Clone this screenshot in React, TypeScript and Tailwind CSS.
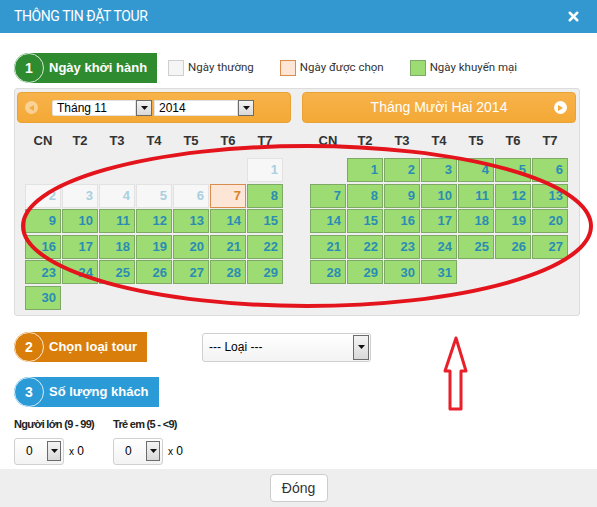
import React from "react";
import { X } from "lucide-react";

type Cell = { d: number | null; kind?: "off" | "sel" | "promo" };

const days = ["CN", "T2", "T3", "T4", "T5", "T6", "T7"];

function buildNov(): Cell[] {
  const cells: Cell[] = [];
  for (let i = 0; i < 6; i++) cells.push({ d: null });
  for (let d = 1; d <= 30; d++) {
    if (d <= 6) cells.push({ d, kind: "off" });
    else if (d === 7) cells.push({ d, kind: "sel" });
    else cells.push({ d, kind: "promo" });
  }
  return cells;
}

function buildDec(): Cell[] {
  const cells: Cell[] = [{ d: null }];
  for (let d = 1; d <= 31; d++) cells.push({ d, kind: "promo" });
  return cells;
}

function DayCell({ cell }: { cell: Cell }) {
  if (cell.d === null) return <div className="h-[24px]" />;
  const cls =
    cell.kind === "off"
      ? "bg-[#f7f7f7] border-[#e2e2e2] text-[#a9cfe0]"
      : cell.kind === "sel"
      ? "bg-[#fde6d6] border-[#d98c4e] text-[#d7822f]"
      : "bg-[#9ddc72] border-[#7ea866] text-[#2a8cb4]";
  return (
    <div className={`h-[24px] border flex items-center justify-end pr-[4px] text-[13px] font-bold ${cls}`}>
      {cell.d}
    </div>
  );
}

function DropBtn({ className }: { className: string }) {
  return (
    <span className={`flex items-center justify-center border border-[#6b6b6b] bg-gradient-to-b from-[#f4f4f4] to-[#d9d9d9] ${className}`}>
      <svg width="7" height="4" viewBox="0 0 7 4">
        <path d="M0 0 L7 0 L3.5 4 Z" fill="#111" />
      </svg>
    </span>
  );
}

function MonthPanel({ cells, left }: { cells: Cell[]; left: boolean }) {
  return (
    <div className="w-[274px]">
      <div className="h-[31px] rounded-[4px] border border-[#e9a236] bg-gradient-to-b from-[#f7b24a] to-[#f4a935] flex items-center relative">
        {left ? (
          <div className="flex items-center w-full">
            <span className="ml-[7px] w-[13px] h-[13px] rounded-full bg-white/45 flex items-center justify-center">
              <svg width="5" height="6" viewBox="0 0 5 6">
                <path d="M5 0 L0 3 L5 6 Z" fill="#f4ab3c" />
              </svg>
            </span>
            <div className="ml-[14px] flex items-center">
              <span className="w-[84px] h-[16px] bg-white rounded-l-[2px] border border-[#e2e2e2] text-[12px] text-black leading-[14px] pl-[4px]">
                Tháng 11
              </span>
              <DropBtn className="w-[16px] h-[16px]" />
              <span className="ml-[2px] w-[84px] h-[16px] bg-white border border-[#e2e2e2] text-[12px] text-black leading-[14px] pl-[4px]">
                2014
              </span>
              <DropBtn className="w-[16px] h-[16px]" />
            </div>
          </div>
        ) : (
          <>
            <span className="flex-1 text-center text-white text-[14px]">Tháng Mười Hai 2014</span>
            <span className="absolute right-[8px] top-[8px] w-[13px] h-[13px] rounded-full bg-white flex items-center justify-center">
              <svg width="5" height="6" viewBox="0 0 5 6">
                <path d="M0 0 L5 3 L0 6 Z" fill="#f4ab3c" />
              </svg>
            </span>
          </>
        )}
      </div>
      <div className="px-[8px]">
        <div className="grid grid-cols-[repeat(7,36px)] gap-x-[1px] h-[35px] items-center">
          {days.map((d) => (
            <div key={d} className="text-center text-[13px] font-bold text-[#333]">
              {d}
            </div>
          ))}
        </div>
        <div className="grid grid-cols-[repeat(7,36px)] gap-x-[1px] gap-y-[1.6px]">
          {cells.map((c, i) => (
            <DayCell key={i} cell={c} />
          ))}
        </div>
      </div>
    </div>
  );
}

function Step({ n, label, color }: { n: number; label: string; color: string }) {
  return (
    <div className={`h-[30px] rounded-l-full rounded-r-[5px] ${color} flex items-center pr-[10px] text-white font-bold`}>
      <span className="w-[30px] h-[30px] rounded-full border border-white/80 flex items-center justify-center text-[14px]">
        {n}
      </span>
      <span className="ml-[5px] text-[13px]">{label}</span>
    </div>
  );
}

function SmallSelect() {
  return (
    <div className="flex items-center">
      <div className="w-[50px] h-[27px] rounded-[3px] border border-[#d0d0d0] bg-gradient-to-b from-white to-[#f3f3f3] flex items-center justify-between pl-[11px] pr-[2px]">
        <span className="text-[12px] text-black">0</span>
        <DropBtn className="w-[14px] h-[20px]" />
      </div>
      <span className="ml-[5px] text-[12px] text-black">
        <span className="text-[10px]">x</span> 0
      </span>
    </div>
  );
}

export default function App() {
  return (
    <div className="w-[597px] h-[507px] relative bg-white flex flex-col font-['Liberation_Sans',Arial,sans-serif] overflow-hidden">
      <div className="h-[33px] bg-[#3498d0] flex items-center justify-between pl-[14px] pr-[16px] shrink-0">
        <span className="text-white text-[14px] tracking-[-0.4px] font-['Roboto',sans-serif]">THÔNG TIN ĐẶT TOUR</span>
        <X size={15} strokeWidth={4} className="text-white" />
      </div>

      <div className="flex-1 pl-[14px]">
        <div className="mt-[20px] flex items-center">
          <Step n={1} label="Ngày khởi hành" color="bg-[#2f8b30]" />
          <div className="ml-[11px] flex items-center gap-[26px] text-[11.5px] text-[#333] font-['Roboto',sans-serif]">
            <div className="flex items-center gap-[4px]">
              <span className="w-[16px] h-[16px] bg-[#f5f5f5] border border-[#cfcfcf]" />
              Ngày thường
            </div>
            <div className="flex items-center gap-[4px]">
              <span className="w-[16px] h-[16px] bg-[#fde6d6] border border-[#d98c4e]" />
              Ngày được chọn
            </div>
            <div className="flex items-center gap-[4px]">
              <span className="w-[16px] h-[16px] bg-[#9ddc72] border border-[#7ea866]" />
              Ngày khuyến mại
            </div>
          </div>
        </div>

        <div className="mt-[5px] w-[566px] h-[228px] bg-[#efefef] border border-[#dcdcdc] rounded-[3px] pt-[3px] pl-[2px] flex gap-[11px]">
          <MonthPanel cells={buildNov()} left />
          <MonthPanel cells={buildDec()} left={false} />
        </div>

        <div className="mt-[16px] flex items-center">
          <Step n={2} label="Chọn loại tour" color="bg-[#d97e0b]" />
          <div className="ml-[55px] w-[169px] h-[29px] rounded-[3px] border border-[#cfcfcf] bg-gradient-to-b from-white to-[#f3f3f3] flex items-center justify-between pl-[6px] pr-[1px]">
            <span className="text-[12px] text-black">--- Loại ---</span>
            <DropBtn className="w-[16px] h-[25px]" />
          </div>
        </div>

        <div className="mt-[15px] flex">
          <Step n={3} label="Số lượng khách" color="bg-[#2b9bd7]" />
        </div>

        <div className="mt-[9px] flex">
          <div className="w-[99px]">
            <div className="text-[11px] font-bold tracking-[-0.7px] text-[#222]">Người lớn (9 - 99)</div>
            <div className="mt-[5px]">
              <SmallSelect />
            </div>
          </div>
          <div>
            <div className="text-[11px] font-bold tracking-[-0.7px] text-[#222]">Trẻ em (5 - &lt;9)</div>
            <div className="mt-[5px]">
              <SmallSelect />
            </div>
          </div>
        </div>
      </div>

      <div className="h-[38px] bg-[#eeeeee] flex items-center justify-center shrink-0">
        <button className="w-[58px] h-[28px] bg-white border border-[#cccccc] rounded-[4px] text-[14px] text-[#333]">
          Đóng
        </button>
      </div>

      <svg className="absolute inset-0 pointer-events-none" width="597" height="507" viewBox="0 0 597 507">
        <ellipse cx="307" cy="226" rx="284" ry="80" fill="none" stroke="#e3141c" strokeWidth="4" />
        <path
          d="M456 338 L445 371 L450 371 L450 409 L461 409 L461 371 L466 371 Z"
          fill="white"
          stroke="#e8202a"
          strokeWidth="3"
          strokeLinejoin="round"
        />
      </svg>
    </div>
  );
}
